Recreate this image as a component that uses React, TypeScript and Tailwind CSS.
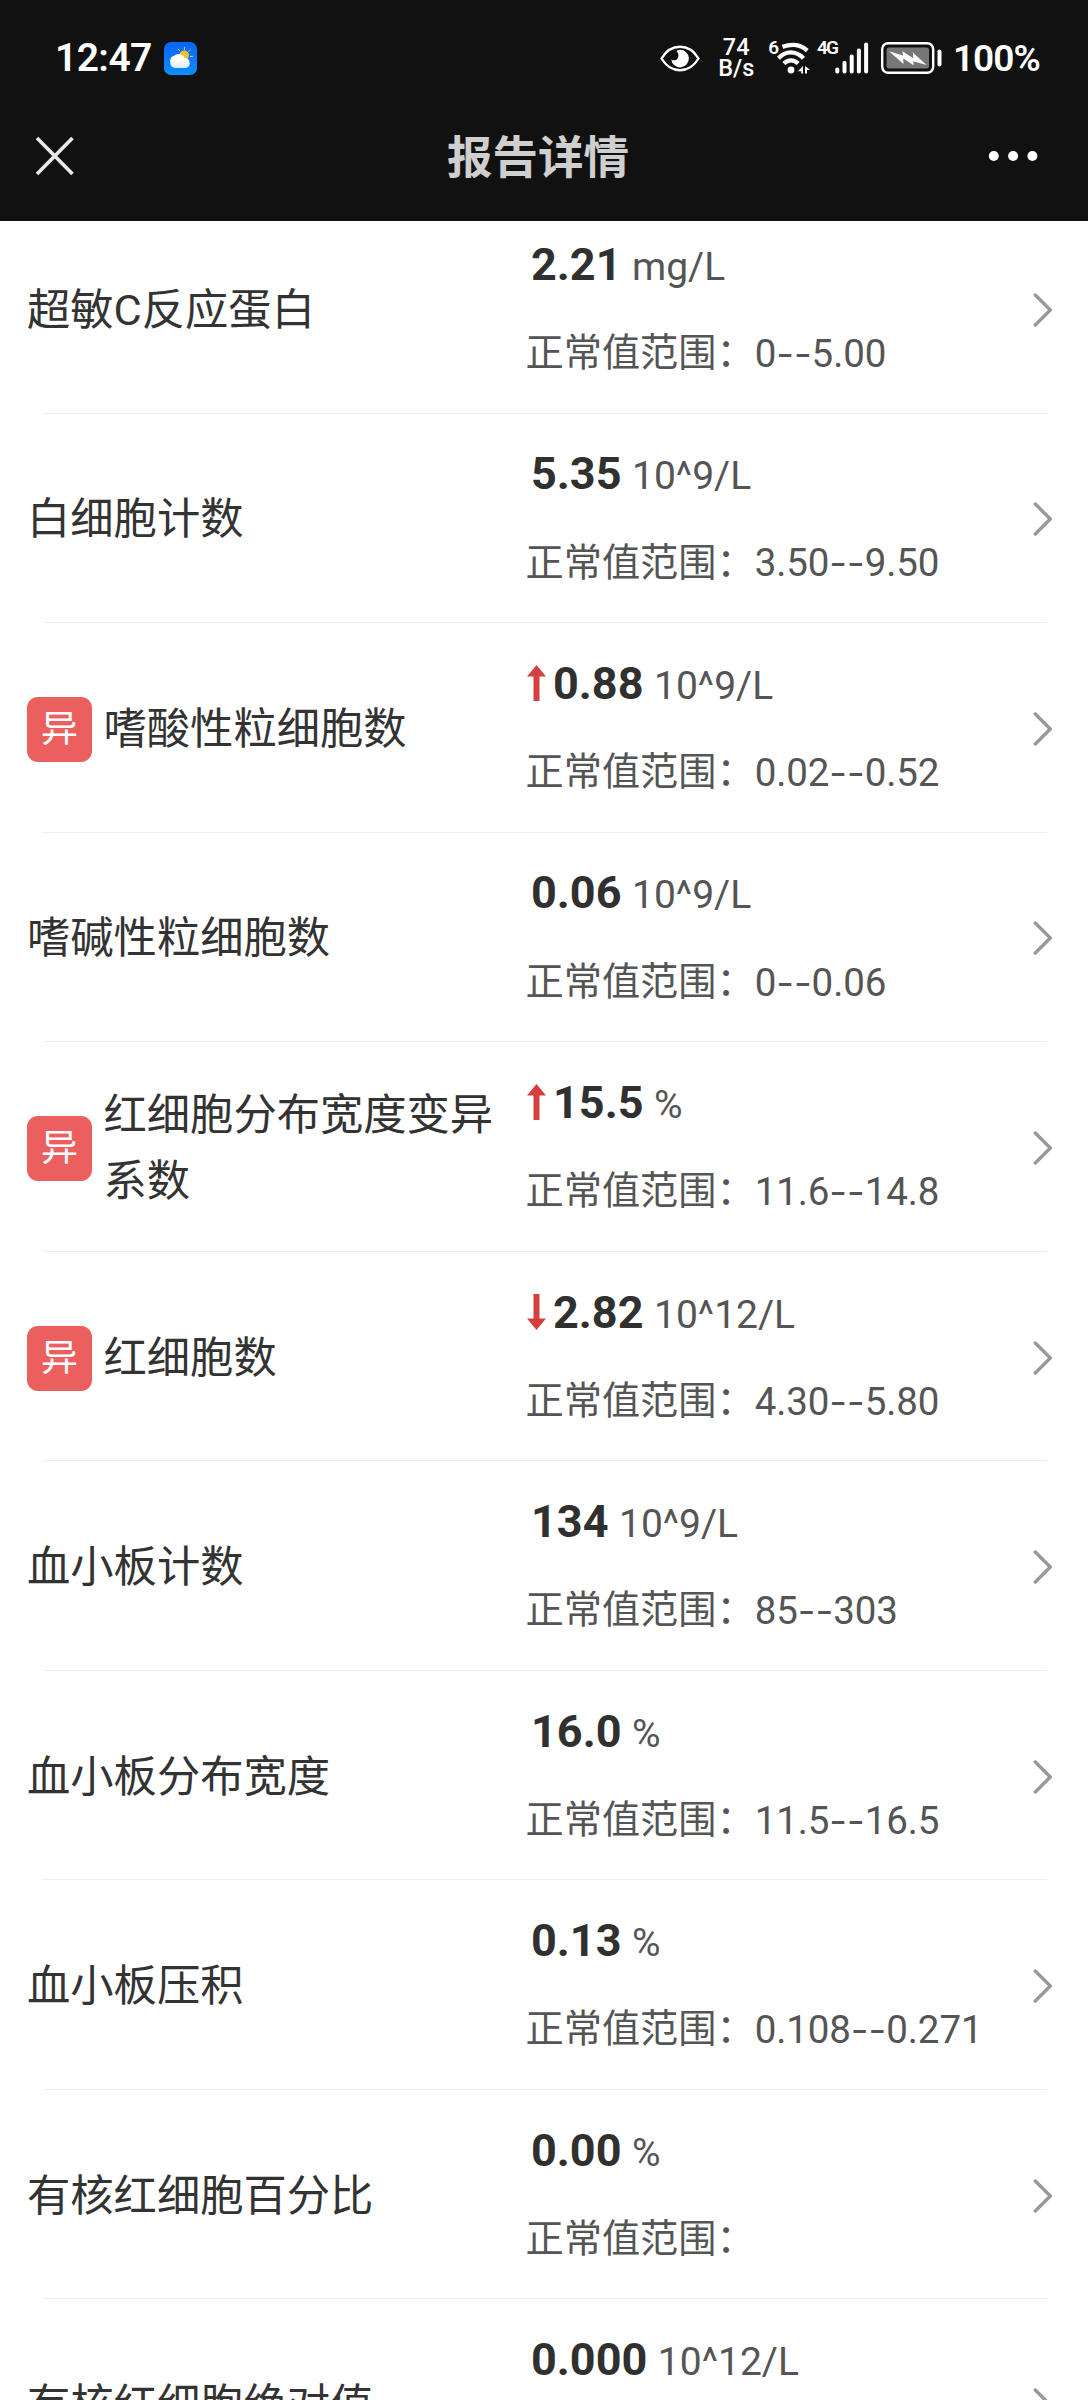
import React from "react";

type Trend = "up" | "down";

interface ReportItem {
  name: string;
  value: string;
  unit: string;
  range: [string, string] | null;
  trend?: Trend;
}

const items: ReportItem[] = [
  { name: "超敏C反应蛋白", value: "2.21", unit: "mg/L", range: ["0", "5.00"] },
  { name: "白细胞计数", value: "5.35", unit: "10^9/L", range: ["3.50", "9.50"] },
  { name: "嗜酸性粒细胞数", value: "0.88", unit: "10^9/L", range: ["0.02", "0.52"], trend: "up" },
  { name: "嗜碱性粒细胞数", value: "0.06", unit: "10^9/L", range: ["0", "0.06"] },
  { name: "红细胞分布宽度变异系数", value: "15.5", unit: "%", range: ["11.6", "14.8"], trend: "up" },
  { name: "红细胞数", value: "2.82", unit: "10^12/L", range: ["4.30", "5.80"], trend: "down" },
  { name: "血小板计数", value: "134", unit: "10^9/L", range: ["85", "303"] },
  { name: "血小板分布宽度", value: "16.0", unit: "%", range: ["11.5", "16.5"] },
  { name: "血小板压积", value: "0.13", unit: "%", range: ["0.108", "0.271"] },
  { name: "有核红细胞百分比", value: "0.00", unit: "%", range: null },
  { name: "有核红细胞绝对值", value: "0.000", unit: "10^12/L", range: null },
];

function WeatherIcon() {
  return (
    <svg className="ml-3 h-[33px] w-[33px]" viewBox="0 0 33 33">
      <defs>
        <linearGradient id="sky" x1="0" y1="0" x2="0" y2="1">
          <stop offset="0" stopColor="#0a63f5" />
          <stop offset="1" stopColor="#0a90ff" />
        </linearGradient>
        <linearGradient id="cloud" x1="0" y1="0" x2="0" y2="1">
          <stop offset="0.4" stopColor="#ffffff" />
          <stop offset="1" stopColor="#dcebfb" />
        </linearGradient>
      </defs>
      <rect width="33" height="33" rx="7" fill="url(#sky)" />
      <g stroke="#f5d77a" strokeWidth="0.9" strokeLinecap="round">
        <path d="M14.3 7.2l1.3 1.6M20.4 5.3v2.2M26.3 8l-1.4 1.4M28.6 14.4h-2.2" />
      </g>
      <circle cx="20.2" cy="13.4" r="4.8" fill="#fbc02d" />
      <path
        d="M11.5 26a5.8 6.4 0 0 1-1-12.6 6.8 6.8 0 0 1 10.2 2.6 5.1 5.1 0 0 1 1.3 10z"
        fill="url(#cloud)"
      />
    </svg>
  );
}

function EyeIcon() {
  return (
    <svg className="h-[27px] w-[40px]" viewBox="0 0 40 27">
      <path
        d="M1.5 13.5C6 6 12.5 1.8 20 1.8S34 6 38.5 13.5C34 21 27.5 25.2 20 25.2S6 21 1.5 13.5z"
        fill="none"
        stroke="#fff"
        strokeWidth="2.4"
      />
      <path
        d="M19.5 4.8a8.8 8.8 0 1 1-8.2 9.6c1.7 1.4 4.4 1.3 6-.5 1.9-2.2 1.5-6-1-7.8.9-.8 2-1.2 3.2-1.3z"
        fill="#fff"
      />
    </svg>
  );
}

function WifiIcon() {
  return (
    <svg className="h-[34px] w-[36px]" viewBox="0 0 36 34">
      <g fill="none" stroke="#fff" strokeWidth="4.2">
        <path d="M8.5 5.8Q14.5 3.6 20 3.8Q27.5 4.3 33.3 9.6" />
        <path d="M4.5 17.2Q10 11.3 16.5 11.3Q24 11.3 29.5 17.2" />
        <path d="M9.8 22.6Q13 19.4 17 19.4Q21 19.4 24.2 22.6" />
      </g>
      <circle cx="17" cy="29" r="3.4" fill="#fff" />
      <path d="M29 25v7.500h-1.800v-2.300h-3.400zM31 32.500v-7.500l5.400 4h-3.400v3.500z" fill="#fff" />
    </svg>
  );
}

function SignalIcon() {
  return (
    <svg className="h-[32px] w-[34px]" viewBox="0 0 34 32" fill="#fff">
      <rect x="0.3" y="25.5" width="4" height="6" rx="1.8" />
      <rect x="7.5" y="19" width="4" height="12.5" rx="1.8" />
      <rect x="14.7" y="12.5" width="4" height="19" rx="1.8" />
      <rect x="21.9" y="6.5" width="4" height="25" rx="1.8" />
      <rect x="29.1" y="0.5" width="4" height="31" rx="1.8" />
    </svg>
  );
}

function BatteryIcon() {
  return (
    <svg className="ml-3 h-[32px] w-[61px]" viewBox="0 0 61 32">
      <rect x="1.2" y="1.2" width="51" height="29.6" rx="6" fill="none" stroke="#fff" strokeWidth="2.4" />
      <rect x="5.5" y="5.5" width="42.5" height="21" rx="2.5" fill="#777" />
      <rect x="56.5" y="7.5" width="4" height="17" rx="1.8" fill="#fff" />
      <path d="M8 9.300l14 4.200-.6-4.300 10.800 7-.4-5.800L45.500 23l-13.300-3.700.6 3.900-10.600-6.600.3 5.500z" fill="#fff" />
    </svg>
  );
}

function StatusBar() {
  return (
    <div className="flex h-[116px] items-center justify-between pl-[55px] pr-[48px] text-white">
      <div className="flex items-center">
        <span className="text-[39px] font-semibold leading-none tracking-[-0.6px]">12:47</span>
        <WeatherIcon />
      </div>
      <div className="flex items-center">
        <EyeIcon />
        <div className="ml-[19px] flex w-[34px] flex-col items-center text-[23.5px] font-medium leading-[21px]">
          <span>74</span>
          <span>B/s</span>
        </div>
        <span className="ml-[15px] self-start text-[19px] font-semibold leading-[22px]">6</span>
        <span className="-ml-[5px]">
          <WifiIcon />
        </span>
        <span className="-mr-[2px] ml-[7px] self-start text-[19px] font-semibold leading-[22px] tracking-[-2px]">4G</span>
        <SignalIcon />
        <BatteryIcon />
        <span className="ml-[11px] text-[37px] font-semibold leading-none tracking-[-0.9px]">100%</span>
      </div>
    </div>
  );
}

function TitleBar() {
  return (
    <div className="flex h-[105px] items-start justify-between pl-[35px] pr-[50px] pt-[20px]">
      <svg className="h-10 w-10" viewBox="0 0 40 40" stroke="#e8e8e8" strokeWidth="3.6">
        <path d="M2 2l35.5 36M37.5 2L2 38" />
      </svg>
      <h1 className="ml-[13px] pt-[3px] text-[45.5px] font-bold leading-[40px] text-[#cfcfcf]">报告详情</h1>
      <svg className="h-10 w-[50px]" viewBox="0 0 50 40" fill="#fff">
        <circle cx="5.8" cy="20" r="5" />
        <circle cx="25.1" cy="20" r="5" />
        <circle cx="44.4" cy="20" r="5" />
      </svg>
    </div>
  );
}

function TrendArrow({ trend }: { trend: Trend }) {
  return (
    <svg
      className={trend === "down" ? "mb-[2px] mr-[7px] h-9 w-[19px] rotate-180" : "mb-[2px] mr-[7px] h-9 w-[19px]"}
      viewBox="0 0 19 36"
      fill="#d63f3f"
    >
      <path d="M9.5 0L19 11.5H12.5V36H6.5V11.5H0z" />
    </svg>
  );
}

function ReportRow({ item }: { item: ReportItem }) {
  const { name, value, unit, range, trend } = item;

  return (
    <li className="flex h-[209.56px] shrink-0 flex-col">
      <div className="flex flex-1 items-center">
        <div className="flex w-[525.5px] items-center pl-[27px] pr-2">
          {trend && (
            <span className="mr-[11.5px] mt-[4px] flex h-[65px] w-[65px] shrink-0 items-center justify-center rounded-[11px] bg-[#ec5f5f] text-[37px] leading-none text-white">
              异
            </span>
          )}
          <span className="pt-[5px] text-[43.3px] leading-[66px] text-[#333]">{name}</span>
        </div>
        <div className="flex-1 whitespace-nowrap">
          <div className={trend ? "flex h-[87px] items-center pl-[1.5px]" : "flex h-[87px] items-center pl-[5.5px]"}>
            {trend && <TrendArrow trend={trend} />}
            <div className="flex items-baseline pb-px">
              <span className="text-[45px] font-bold leading-none text-[#303030]">{value}</span>
              <span className="ml-[10.5px] text-[39px] leading-none text-[#555]">{unit}</span>
            </div>
          </div>
          <div className="flex h-[87px] items-center pt-[4px] text-[#555]">
            <span className="text-[38.2px]">正常值范围：</span>
            {range && (
              <span className="text-[38.5px] tracking-[-0.1px]">
                {range[0]}
                <span className="font-['Inter',sans-serif] tracking-normal">--</span>
                {range[1]}
              </span>
            )}
          </div>
        </div>
        <svg
          className="mr-[35px] mt-[3px] h-[34px] w-[20px] shrink-0"
          viewBox="0 0 20 34"
          fill="none"
          stroke="#999"
          strokeWidth="3.4"
          strokeLinecap="round"
          strokeLinejoin="round"
        >
          <path d="M2.3 2L17.3 17L2.3 32" />
        </svg>
      </div>
      <div className="ml-[43px] mr-[41px] h-px bg-[#ececec]" />
    </li>
  );
}

export default function App() {
  return (
    <div className="flex h-[2400px] w-[1088px] flex-col overflow-hidden bg-white font-['Roboto','Noto_Sans_CJK_SC',sans-serif]">
      <header className="shrink-0 bg-[#111]">
        <StatusBar />
        <TitleBar />
      </header>
      {/* List is scrolled a little, so the first row sits partly under the header */}
      <main className="flex-1 overflow-hidden">
        <ul className="-mt-[17px] flex flex-col">
          {items.map((item) => (
            <ReportRow key={item.name} item={item} />
          ))}
        </ul>
      </main>
    </div>
  );
}
